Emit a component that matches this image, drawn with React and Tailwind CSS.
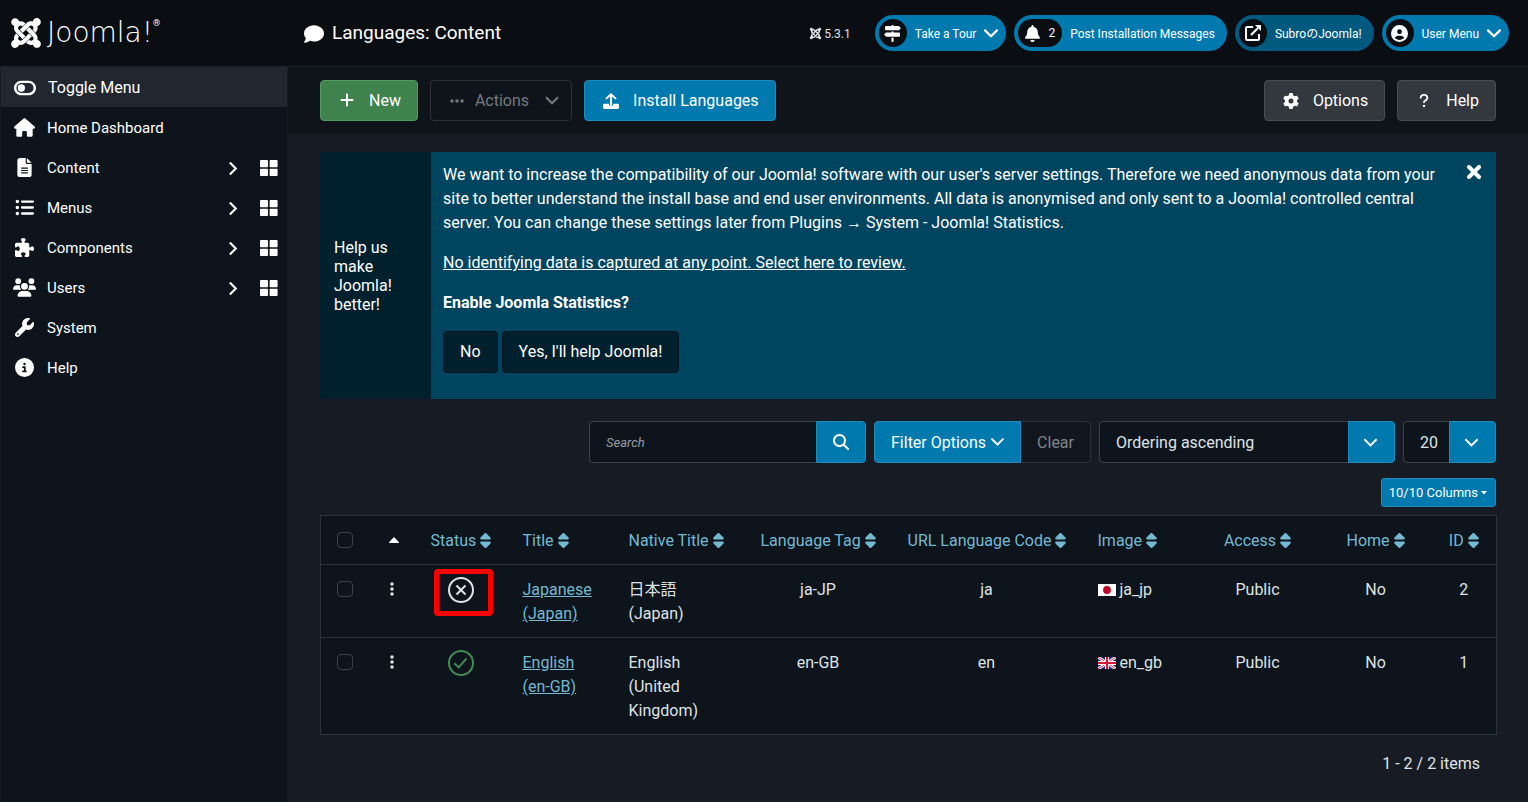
import {
  FaBell,
  FaCircleInfo,
  FaCircleUser,
  FaComment,
  FaEllipsis,
  FaEllipsisVertical,
  FaFileLines,
  FaGear,
  FaHouse,
  FaJoomla,
  FaListUl,
  FaMagnifyingGlass,
  FaPlus,
  FaPuzzlePiece,
  FaQuestion,
  FaSignsPost,
  FaSort,
  FaToggleOff,
  FaUsers,
  FaWrench,
  FaXmark,
} from 'react-icons/fa6';

const menuItems = [
  { label: 'Home Dashboard', icon: FaHouse, size: 'size-[21px]' },
  { label: 'Content', icon: FaFileLines, size: 'size-[19px]', children: true },
  { label: 'Menus', icon: FaListUl, size: 'size-[19px]', children: true },
  { label: 'Components', icon: FaPuzzlePiece, size: 'size-[19px]', children: true },
  { label: 'Users', icon: FaUsers, size: 'size-[23px]', children: true },
  { label: 'System', icon: FaWrench, size: 'size-[19px]' },
  { label: 'Help', icon: FaCircleInfo, size: 'size-[19px]' },
];

const languages = [
  {
    id: 2,
    published: false,
    highlight: true,
    title: 'Japanese (Japan)',
    native: '日本語 (Japan)',
    tag: 'ja-JP',
    code: 'ja',
    image: 'ja_jp',
  },
  {
    id: 1,
    published: true,
    title: 'English (en-GB)',
    native: 'English (United Kingdom)',
    tag: 'en-GB',
    code: 'en',
    image: 'en_gb',
  },
];

function Chevron({ className = '', stroke = 2, round = false }) {
  return (
    <svg
      viewBox="0 0 16 10"
      fill="none"
      stroke="currentColor"
      strokeWidth={stroke}
      strokeLinecap={round ? 'round' : 'butt'}
      strokeLinejoin={round ? 'round' : 'miter'}
      className={className}
      aria-hidden="true"
    >
      <path d="M1.2 1.4 8 8.2l6.8-6.8" />
    </svg>
  );
}

function DashboardIcon() {
  return (
    <svg viewBox="0 0 18 16" className="h-4 w-[18px]" fill="currentColor" aria-hidden="true">
      <rect x="0" y="0" width="8" height="7.2" rx="0.8" />
      <rect x="9.6" y="0" width="8" height="7.2" rx="0.8" />
      <rect x="0" y="8.8" width="8" height="7.2" rx="0.8" />
      <rect x="9.6" y="8.8" width="8" height="7.2" rx="0.8" />
    </svg>
  );
}

function UploadIcon() {
  return (
    <svg viewBox="0 0 16 16" className="size-4" fill="none" stroke="currentColor" strokeWidth="2" aria-hidden="true">
      <path d="M8 11.5V1.5M3.6 5.4 8 1.2l4.4 4.2" strokeLinejoin="round" strokeLinecap="round" />
      <path
        d="M1.4 10.8H6v1.6h4v-1.6h4.6c.8 0 1.4.6 1.4 1.4v2.4c0 .8-.6 1.4-1.4 1.4H1.4C.6 16 0 15.4 0 14.6v-2.4c0-.8.6-1.4 1.4-1.4z"
        fill="currentColor"
        stroke="none"
      />
    </svg>
  );
}

function ExternalIcon() {
  return (
    <svg viewBox="0 0 16 16" className="size-4" fill="none" stroke="currentColor" strokeWidth="2" aria-hidden="true">
      <path d="M8 2H2.2C1.5 2 1 2.5 1 3.2v10.6c0 .7.5 1.2 1.2 1.2h10.6c.7 0 1.2-.5 1.2-1.2V9" />
      <path d="m6 10 7-7" strokeWidth="2.2" />
      <path d="M10 0h6v6z" fill="currentColor" stroke="none" />
    </svg>
  );
}

function StatusIcon({ published }) {
  return (
    <svg
      viewBox="0 0 26 26"
      className={published ? 'size-[26px] text-[#448b54]' : 'size-[26px] text-[#dfe3e7]'}
      fill="none"
      stroke="currentColor"
      strokeWidth="2"
      aria-hidden="true"
    >
      <circle cx="13" cy="13" r="12" />
      {published ? <path d="m6.4 13.2 4.2 4.2 8-9" /> : <path d="m8.5 8.5 9 9m0-9-9 9" />}
    </svg>
  );
}

function Flag({ code }) {
  if (code === 'ja_jp') {
    return (
      <svg viewBox="0 0 18 12" className="h-3 w-[18px]" aria-hidden="true">
        <rect width="18" height="12" fill="#fff" />
        <circle cx="9" cy="6" r="3.9" fill="#bf0027" />
      </svg>
    );
  }
  return (
    <svg viewBox="0 0 18 12" className="h-3 w-[18px]" aria-hidden="true">
      <rect width="18" height="12" fill="#1b2a80" />
      <path d="M0 0l18 12M18 0 0 12" stroke="#fff" strokeWidth="2.8" />
      <path d="M0 0l18 12M18 0 0 12" stroke="#d8173a" strokeWidth="0.9" />
      <path d="M9 0v12M0 6h18" stroke="#fff" strokeWidth="4" />
      <path d="M9 0v12M0 6h18" stroke="#d8173a" strokeWidth="2.2" />
    </svg>
  );
}

function HeaderPill({ icon, label, count, caret, dark }) {
  return (
    <button
      type="button"
      className={`flex h-9 items-center rounded-full py-1 pl-1 text-xs whitespace-nowrap text-white ${
        dark ? 'bg-[#005a80]' : 'bg-[#0079af]'
      } ${caret ? 'pr-2' : 'pr-3'}`}
    >
      <span
        className={`flex h-7 min-w-7 items-center justify-center gap-2 rounded-full bg-[#0a0d12] ${
          count ? 'px-[7px]' : 'px-1'
        }`}
      >
        {icon}
        {count && <span>{count}</span>}
      </span>
      <span className="ml-2 pt-px">{label}</span>
      {caret && <Chevron className="ml-2 h-[9px] w-[14px]" stroke={2.6} round />}
    </button>
  );
}

function SortHeader({ label, className = '' }) {
  return (
    <th scope="col" className={`px-4 pt-[13px] pb-[11px] font-normal whitespace-nowrap ${className}`}>
      <a href="#sort" className="inline-flex items-center gap-1 text-[#74b9d2]">
        {label}
        <FaSort className="mb-0.5 h-[17px] w-[11px]" />
      </a>
    </th>
  );
}

function ListSelect({ label, value, className }) {
  return (
    <div className={`grid h-[42px] ${className}`}>
      <select
        aria-label={label}
        defaultValue={value}
        className="col-start-1 row-start-1 w-full appearance-none rounded border border-[#3c424a] bg-[#0e141b] pt-0.5 pr-12 pl-4 text-[#dfe3e7]"
      >
        <option>{value}</option>
      </select>
      <span className="pointer-events-none col-start-1 row-start-1 flex w-[47px] items-center justify-center justify-self-end rounded-r border border-[#1f8cbd] bg-[#0079af] pr-0.5 text-white">
        <Chevron className="h-[9px] w-[15px]" />
      </span>
    </div>
  );
}

export default function App() {
  return (
    <div className="flex min-h-screen flex-col bg-[#171b24] font-['Roboto','Noto_Sans_CJK_JP',sans-serif] text-base text-[#dfe3e7]">
      <header className="flex h-[67px] items-center border-b border-[#1b2029] bg-[#0a0d12] pr-[19px] text-white">
        <a href="#home" className="flex w-[304px] shrink-0 items-center gap-1 pl-[9px]" aria-label="Joomla!">
          <FaJoomla className="size-[34px]" />
          <span className="flex items-start font-['DejaVu_Sans'] text-[28px] leading-8 font-extralight">
            Joomla!
            <span className="font-['Roboto'] text-[9px] leading-3 font-normal">®</span>
          </span>
        </a>
        <h1 className="flex flex-1 items-center gap-2 pt-px text-[19px] whitespace-nowrap">
          <FaComment className="size-5" />
          Languages: Content
        </h1>
        <div className="flex items-center gap-2">
          <span className="mr-4 flex items-center gap-0.5 pt-px text-xs text-[#dfe3e7]">
            <FaJoomla className="size-[13px]" />
            5.3.1
          </span>
          <HeaderPill icon={<FaSignsPost className="size-[17px]" />} label="Take a Tour" caret />
          <HeaderPill icon={<FaBell className="h-[17px] w-[15px]" />} label="Post Installation Messages" count="2" />
          <HeaderPill icon={<ExternalIcon />} label="SubroのJoomla!" dark />
          <HeaderPill icon={<FaCircleUser className="size-[17px]" />} label="User Menu" caret />
        </div>
      </header>

      <div className="flex flex-1">
        <nav className="w-[288px] shrink-0 border-x border-[#171b24] bg-[#0e141b] text-[15px] text-white">
          <button type="button" className="flex h-10 w-full items-center gap-3 bg-[#22262e] pt-px pl-[13px] text-base">
            <FaToggleOff className="size-[22px]" />
            Toggle Menu
          </button>
          <ul className="pt-px">
            {menuItems.map(({ label, icon: Icon, size, children }) => (
              <li key={label} className="flex h-10 items-center pr-[9px] pl-[11px]">
                <a href="#menu" className="flex flex-1 items-center gap-[11px]">
                  <span className="flex w-6 justify-center pb-px">
                    <Icon className={size} />
                  </span>
                  {label}
                </a>
                {children && (
                  <>
                    <Chevron className="mr-5 h-[9px] w-[14px] -rotate-90" stroke={2.4} />
                    <a href="#dashboard" aria-label={`${label} dashboard`}>
                      <DashboardIcon />
                    </a>
                  </>
                )}
              </li>
            ))}
          </ul>
        </nav>

        <div className="min-w-0 flex-1">
          <div className="flex h-[67px] items-center gap-3 bg-[#0f141b] px-8 pb-px text-white">
            <button
              type="button"
              className="flex h-[41px] items-center gap-3 rounded border border-[#4d9e5f] bg-[#40824d] px-4 pt-px"
            >
              <span className="flex w-5 justify-center">
                <FaPlus className="mb-0.5 size-4" />
              </span>
              New
            </button>
            <button
              type="button"
              disabled
              className="flex h-[41px] items-center gap-2 rounded border border-[#2c313a] pt-px pr-3 pl-4 text-[#747980]"
            >
              <span className="flex w-5 justify-center">
                <FaEllipsis className="size-4" />
              </span>
              Actions
              <Chevron className="ml-2 h-[9px] w-[14px]" stroke={2.4} />
            </button>
            <button
              type="button"
              className="flex h-[41px] items-center gap-3 rounded border border-[#1f8cbd] bg-[#0079af] px-4 pt-px"
            >
              <span className="flex w-5 justify-center">
                <UploadIcon />
              </span>
              Install Languages
            </button>
            <button
              type="button"
              className="ml-auto flex h-[41px] items-center gap-3 rounded border border-[#494d54] bg-[#33373e] px-4 pt-px"
            >
              <span className="flex w-5 justify-center">
                <FaGear className="size-4" />
              </span>
              Options
            </button>
            <button
              type="button"
              className="flex h-[41px] items-center gap-3 rounded border border-[#494d54] bg-[#33373e] px-4 pt-px"
            >
              <span className="flex w-5 justify-center">
                <FaQuestion className="h-[15px] w-4" />
              </span>
              Help
            </button>
          </div>

          <main className="flex flex-col px-8 pt-[18px]">
            <section className="flex bg-[#00455f] text-white">
              <div className="flex w-[111px] shrink-0 items-center bg-[#00202e] px-3.5 leading-[19px]">
                Help us make Joomla! better!
              </div>
              <div className="min-w-0 flex-1 px-3 pt-[11px] pb-[26px]">
                <p className="mb-4 font-['Roboto','Liberation_Sans',sans-serif]">
                  We want to increase the compatibility of our Joomla! software with our user's server settings.
                  Therefore we need anonymous data from your site to better understand the install base and end user
                  environments. All data is anonymised and only sent to a Joomla! controlled central server. You can
                  change these settings later from Plugins → System - Joomla! Statistics.
                </p>
                <p className="mb-4">
                  <a href="#review" className="underline">
                    No identifying data is captured at any point. Select here to review.
                  </a>
                </p>
                <p className="mb-4 font-bold">Enable Joomla Statistics?</p>
                <div className="flex gap-1">
                  <button type="button" className="h-[42px] rounded border border-[#00141d] bg-[#00202e] px-4">
                    No
                  </button>
                  <button type="button" className="h-[42px] rounded border border-[#00141d] bg-[#00202e] px-4">
                    Yes, I'll help Joomla!
                  </button>
                </div>
              </div>
              <button type="button" aria-label="Close" className="mt-2.5 mr-3 self-start">
                <FaXmark className="size-5" stroke="currentColor" strokeWidth="40" />
              </button>
            </section>

            <form className="mt-[22px] flex justify-end gap-2">
              <div className="flex">
                <input
                  type="text"
                  aria-label="Search"
                  placeholder="Search"
                  className="h-[42px] w-[227px] rounded-l border border-r-0 border-[#3c424a] bg-[#0e141b] px-4 pb-0.5 placeholder:text-[13px] placeholder:text-[#979ba0] placeholder:italic"
                />
                <button
                  type="button"
                  aria-label="Search"
                  className="flex w-[50px] items-center justify-center rounded-r border border-[#1f8cbd] bg-[#0079af] text-white"
                >
                  <FaMagnifyingGlass className="size-4" />
                </button>
              </div>
              <div className="flex">
                <button
                  type="button"
                  className="flex items-center gap-[5px] rounded-l border border-[#1f8cbd] bg-[#0079af] px-4 pt-0.5 text-white"
                >
                  Filter Options
                  <Chevron className="mb-0.5 h-2 w-[13px]" stroke={2.4} round />
                </button>
                <button
                  type="button"
                  disabled
                  className="rounded-r border border-l-0 border-[#2c313a] bg-[#12171f] px-4 pt-0.5 text-[#80848a]"
                >
                  Clear
                </button>
              </div>
              <ListSelect label="Sort Table By" value="Ordering ascending" className="w-[296px]" />
              <ListSelect label="Items per page" value="20" className="w-[93px]" />
            </form>

            <button
              type="button"
              className="mt-[15px] flex h-[29px] items-center gap-0.5 self-end rounded-[3px] border border-[#1f8cbd] bg-[#0079af] px-[7px] text-[13px] text-white"
            >
              10/10 Columns
              <svg viewBox="0 0 8 4" className="h-1 w-2" fill="currentColor" aria-hidden="true">
                <path d="M1 0h6L4 3.5z" />
              </svg>
            </button>

            <table className="mt-2 w-full table-fixed border-collapse border border-[#2c323a] bg-[#0e141b] text-left">
              <colgroup>
                <col className="w-12" />
                <col className="w-[46px]" />
                <col className="w-[92px]" />
                <col className="w-[106px]" />
                <col className="w-[132px]" />
                <col className="w-[147px]" />
                <col className="w-[190px]" />
                <col className="w-[114px]" />
                <col className="w-[124px]" />
                <col className="w-[112px]" />
                <col className="w-[65px]" />
              </colgroup>
              <thead>
                <tr className="border-b border-[#2c323a]">
                  <th scope="col" className="px-4 py-3">
                    <input
                      type="checkbox"
                      aria-label="Check All Items"
                      className="block size-4 appearance-none rounded border border-[#3c424a]"
                    />
                  </th>
                  <th scope="col" className="px-4 py-3">
                    <a href="#sort" aria-label="Ordering" className="flex justify-end text-white">
                      <svg viewBox="0 0 10 6" className="h-1.5 w-2.5 shrink-0" fill="currentColor" aria-hidden="true">
                        <path d="M0 5.2 5 0l5 5.2q0 .8-.8.8H.8Q0 6 0 5.2z" />
                      </svg>
                    </a>
                  </th>
                  <SortHeader label="Status" className="text-center" />
                  <SortHeader label="Title" />
                  <SortHeader label="Native Title" />
                  <SortHeader label="Language Tag" className="text-center" />
                  <SortHeader label="URL Language Code" className="text-center" />
                  <SortHeader label="Image" />
                  <SortHeader label="Access" className="text-center" />
                  <SortHeader label="Home" className="text-center" />
                  <SortHeader label="ID" className="text-center" />
                </tr>
              </thead>
              <tbody>
                {languages.map((lang) => (
                  <tr key={lang.id} className="border-b border-[#2c323a] align-top">
                    <td className="px-4 py-3">
                      <input
                        type="checkbox"
                        aria-label={`Select ${lang.title}`}
                        className="mt-1 block size-4 appearance-none rounded border border-[#3c424a]"
                      />
                    </td>
                    <td className="py-3">
                      <FaEllipsisVertical className="mx-auto mt-1 size-4" />
                    </td>
                    <td className="py-3">
                      <div className="relative mx-auto size-[26px]">
                        <button type="button" aria-label={lang.published ? 'Published' : 'Unpublished'}>
                          <StatusIcon published={lang.published} />
                        </button>
                        {lang.highlight && (
                          <span className="pointer-events-none absolute -top-2 -left-3.5 h-[47px] w-[59px] rounded border-[5px] border-[#fb0000]" />
                        )}
                      </div>
                    </td>
                    <td className="px-4 pt-[13px] pb-[11px]">
                      <a href="#edit" className="text-[#74b9d2] underline">
                        {lang.title}
                      </a>
                    </td>
                    <td className="px-4 pt-[13px] pb-[11px]">{lang.native}</td>
                    <td className="px-4 pt-[13px] pb-[11px] text-center">{lang.tag}</td>
                    <td className="px-4 pt-[13px] pb-[11px] text-center">{lang.code}</td>
                    <td className="px-4 pt-[13px] pb-[11px]">
                      <span className="flex items-center gap-1">
                        <Flag code={lang.image} />
                        {lang.image}
                      </span>
                    </td>
                    <td className="px-4 pt-[13px] pb-[11px] text-center">Public</td>
                    <td className="px-4 pt-[13px] pb-[11px] text-center">No</td>
                    <td className="px-4 pt-[13px] pb-[11px] text-center">{lang.id}</td>
                  </tr>
                ))}
              </tbody>
            </table>

            <div className="px-4 py-[17px] text-right">1 - 2 / 2 items</div>
          </main>
        </div>
      </div>
    </div>
  );
}
